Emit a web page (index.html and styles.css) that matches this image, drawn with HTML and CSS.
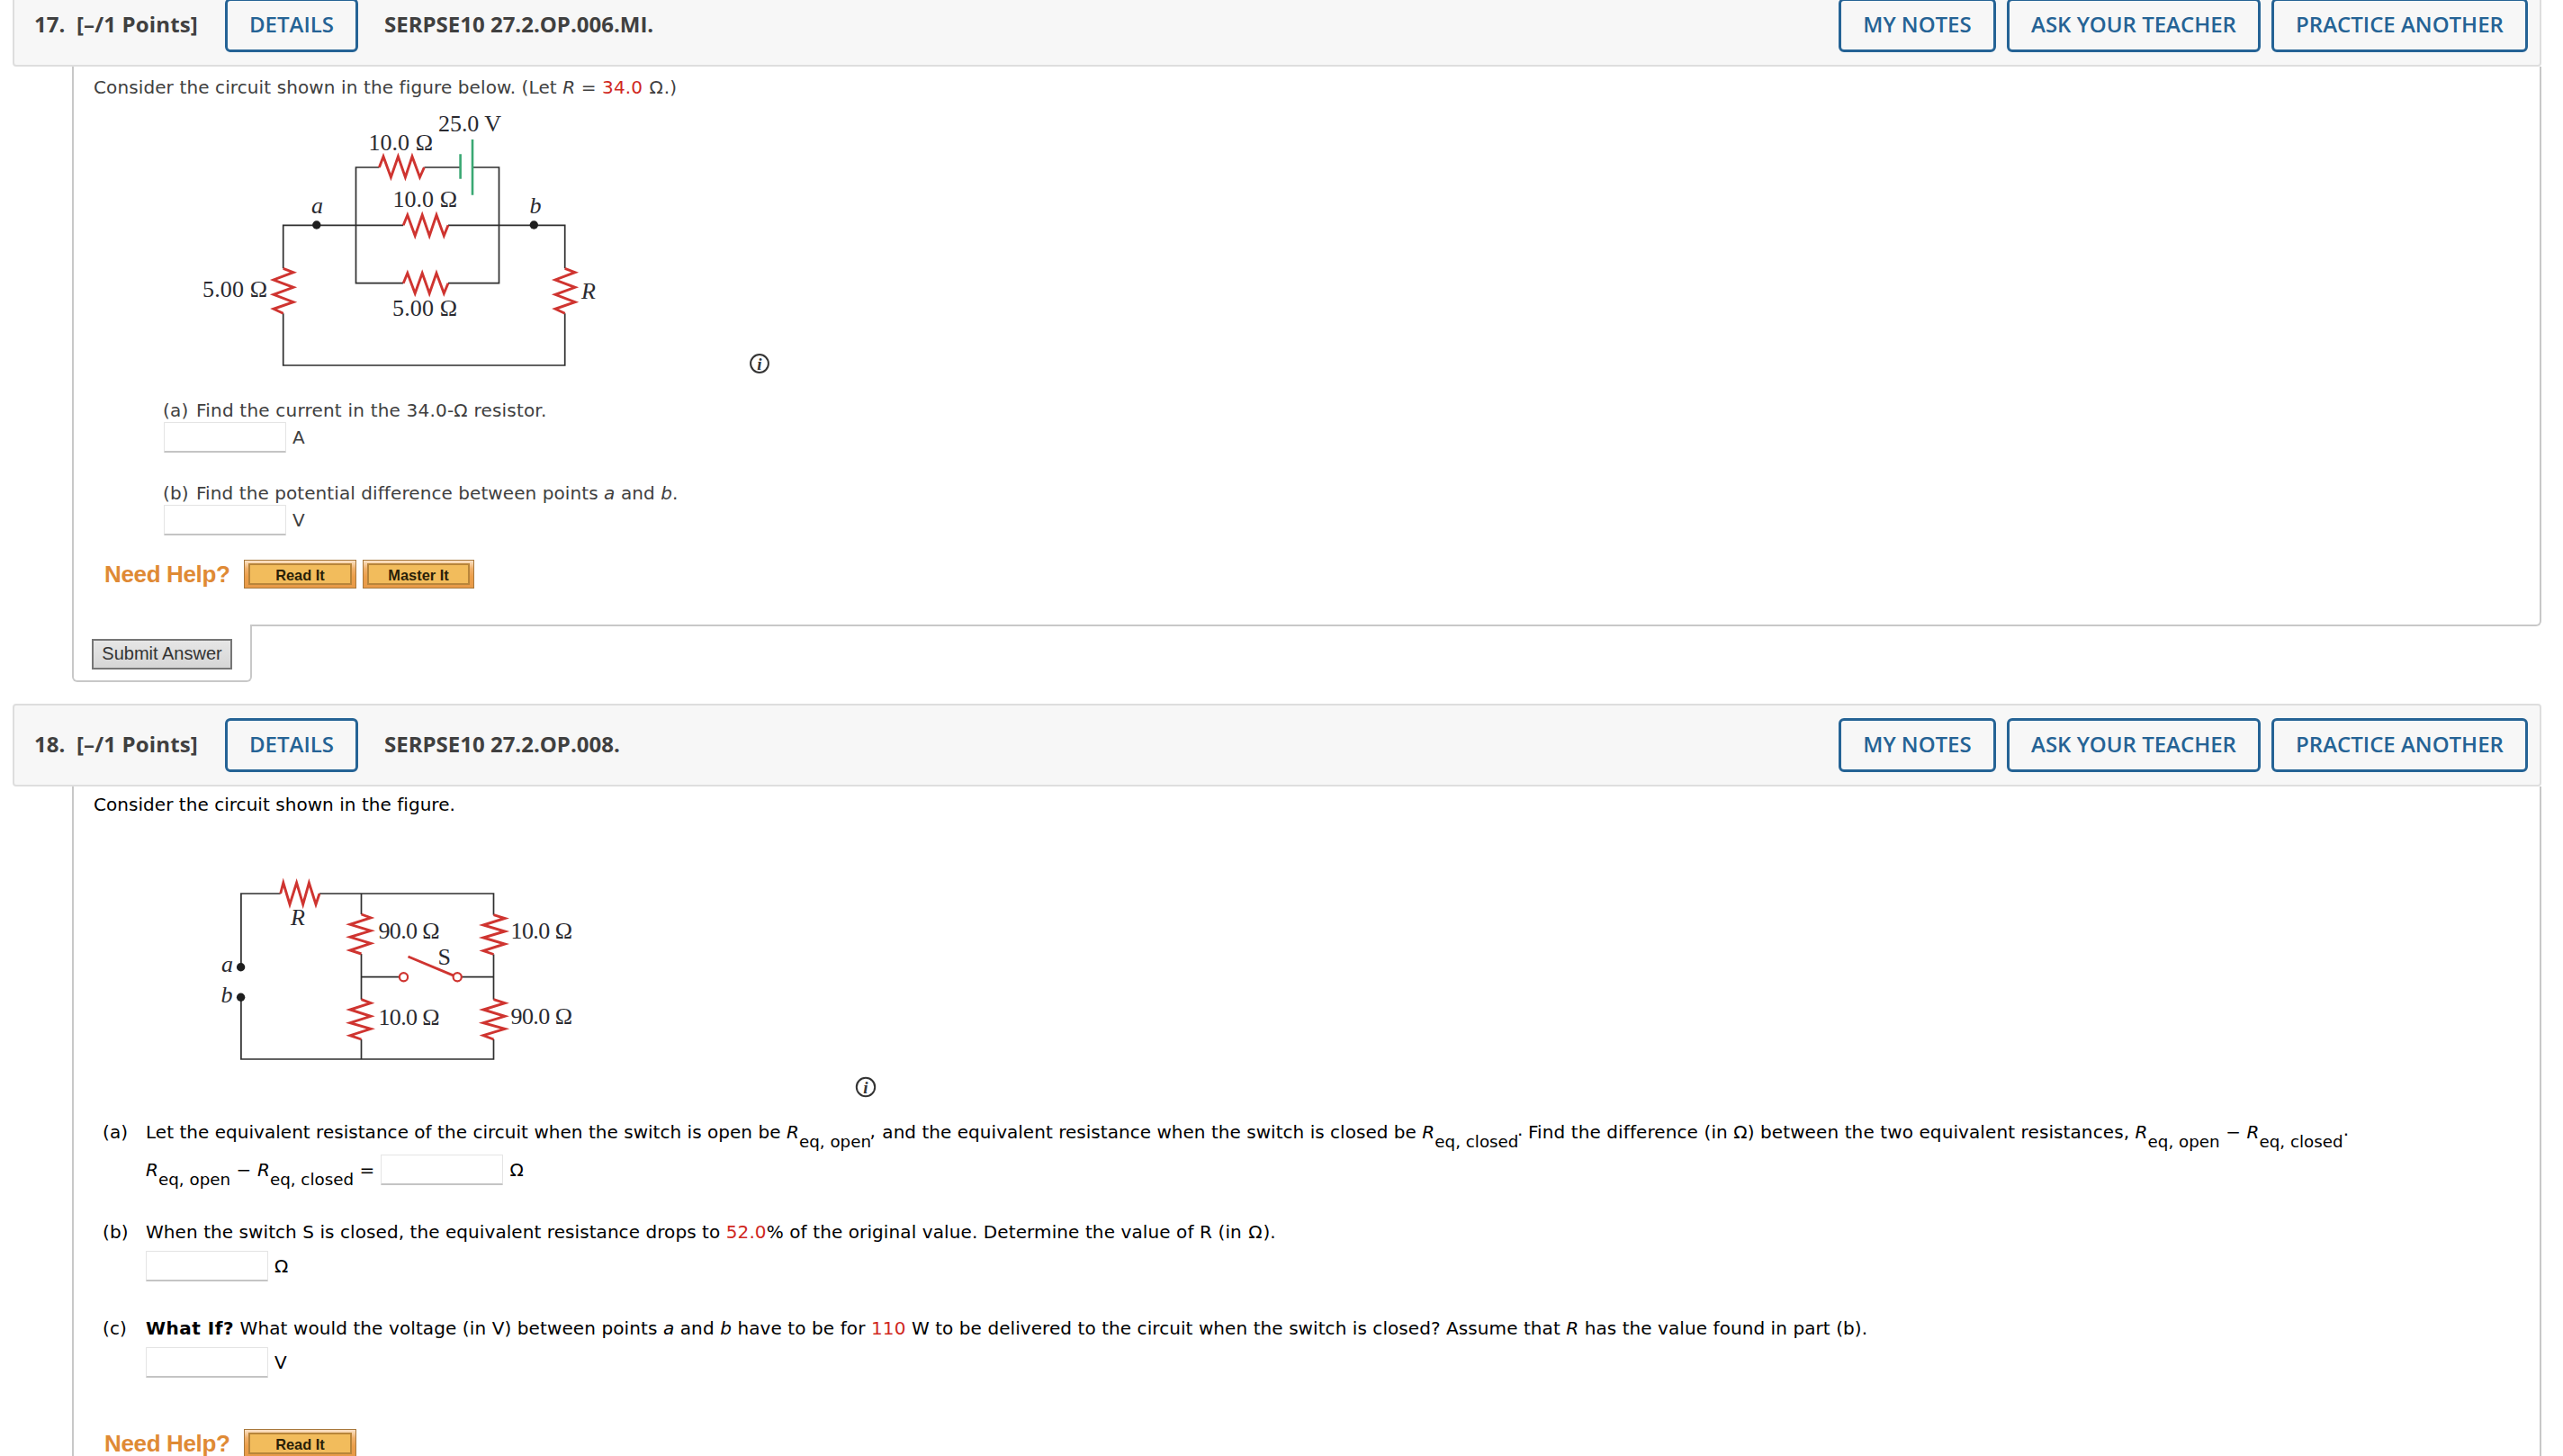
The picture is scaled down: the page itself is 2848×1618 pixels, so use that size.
FILE: index.html
```html
<!DOCTYPE html>
<html lang="en">
<head>
<meta charset="utf-8">
<title>Homework – Circuits</title>
<link rel="stylesheet" href="styles.css">
</head>
<body>
<main class="page">

<section class="question">
  <header class="bar">
    <span class="num">17.</span><span class="points">[–/1 Points]</span>
    <a class="btn details">DETAILS</a>
    <span class="code code-a">SERPSE10 27.2.OP.006.MI.</span>
    <nav class="actions"><a class="btn notes">MY NOTES</a><a class="btn ask">ASK YOUR TEACHER</a><a class="btn practice">PRACTICE ANOTHER</a></nav>
  </header>
  <div class="body body-first">
    <p class="line wide">Consider the circuit shown in the figure below. (Let <i>R</i> = <span class="red">34.0</span> <span class="ohm">Ω</span>.)</p>
    <div class="figure">
      <svg class="circuit" width="728" height="307" viewBox="104 109 728 307">
        <g class="wire">
          <path d="M421.4 186H395.5V314.7H448.2M471.4 186H511.6M525 186H554.5V314.7H498M448.2 250.3H314.7V298.3M498 250.3H627.7V298.3M314.7 348.3V406H627.7V348.3"/>
        </g>
        <g class="resistor">
          <path d="M421.4 186L426 174L434.4 197L442.4 174L450.4 197L458 174L466.5 197L471.4 186"/>
          <path d="M448.2 250.3L452.8 239L461.2 262L469.2 239L477.2 262L485 239L493.3 262L498 250.3"/>
          <path d="M448.2 314.7L452.8 303.5L461.2 326L469.2 303.5L477.2 326L485 303.5L493.3 326L498 314.7"/>
          <path d="M314.7 298.3L326 302.7L304 311L326 319.3L304 327.3L326 335.7L304 343.3L314.7 348.3"/>
          <path d="M627.7 298.3L639 302.7L617 311L639 319.3L617 327.3L639 335.7L617 343.3L627.7 348.3"/>
        </g>
        <path class="battery" d="M511.6 171.3V198.7M525 155V216.7"/>
        <g class="dot"><circle cx="351.8" cy="250" r="4.7"/><circle cx="593.3" cy="250" r="4.7"/></g>
        <g class="lbl">
          <text x="487" y="145.7" textLength="70">25.0 V</text>
          <text x="409.5" y="166.7" textLength="71.5">10.0 Ω</text>
          <text x="436.5" y="230" textLength="71.5">10.0 Ω</text>
          <text x="436" y="351" textLength="72">5.00 Ω</text>
          <text x="225" y="330" textLength="72">5.00 Ω</text>
          <text class="it" x="346" y="237">a</text>
          <text class="it" x="588.5" y="237">b</text>
          <text class="it" x="646" y="331.7">R</text>
        </g>
      </svg>
      <svg class="info" width="24" height="24" viewBox="0 0 24 24"><circle cx="12" cy="12" r="9.9"/><text x="12" y="19" text-anchor="middle">i</text></svg>
    </div>
    <div class="indent">
      <p class="line wider"><span class="tag">(a)</span> Find the current in the 34.0-Ω resistor.</p>
      <div class="answer"><span class="input"></span><span class="unit">A</span></div>
      <p class="line next"><span class="tag">(b)</span> Find the potential difference between points <i>a</i> and <i>b</i>.</p>
      <div class="answer"><span class="input"></span><span class="unit">V</span></div>
    </div>
    <div class="help"><b class="need">Need Help?</b><a class="gold read"><span>Read It</span></a><a class="gold master"><span>Master It</span></a></div>
  </div>
  <div class="tab"><a class="submit">Submit Answer</a></div>
</section>

<section class="question">
  <header class="bar">
    <span class="num">18.</span><span class="points">[–/1 Points]</span>
    <a class="btn details">DETAILS</a>
    <span class="code code-b">SERPSE10 27.2.OP.008.</span>
    <nav class="actions"><a class="btn notes">MY NOTES</a><a class="btn ask">ASK YOUR TEACHER</a><a class="btn practice">PRACTICE ANOTHER</a></nav>
  </header>
  <div class="body body-second">
    <p class="line intro">Consider the circuit shown in the figure.</p>
    <div class="figure">
      <svg class="circuit" width="846" height="314" viewBox="104 906 846 314">
        <g class="wire">
          <path d="M267.9 1074.7V993H311.7M355 993H548.5V1016.7M401.5 993V1016M401.5 1060V1110.7M548.5 1060.5V1110.7M401.5 1155V1177M548.5 1155V1177H267.9V1108.3M401.5 1085.7H444M513 1085.7H548.5"/>
        </g>
        <g class="resistor">
          <path d="M311.7 993L314.8 981L322 1005L329.6 981L336.7 1005L343.4 981L351 1005L355 993"/>
          <path d="M401.5 1016L412 1020L389 1027.3L412 1034.3L389 1041.3L412 1048.3L389 1056L401.5 1060"/>
          <path d="M548.5 1016.7L561 1020.5L537 1028L561 1035L537 1042L561 1049L537 1056.5L548.5 1060.5"/>
          <path d="M401.5 1110.7L412 1114.7L389 1122L412 1129.3L389 1136.7L412 1143.3L389 1150.7L401.5 1155"/>
          <path d="M548.5 1110.7L561 1114.7L537 1122L561 1129.3L537 1136.7L561 1143.3L537 1150.7L548.5 1155"/>
          <path d="M453.5 1063L504.6 1084.3"/>
          <circle cx="448.5" cy="1085.8" r="4.6"/><circle cx="508.2" cy="1085.8" r="4.6"/>
        </g>
        <g class="dot"><circle cx="267.6" cy="1074.7" r="4.7"/><circle cx="267.6" cy="1108.3" r="4.7"/></g>
        <g class="lbl">
          <text class="it" x="323" y="1028.3">R</text>
          <text x="420.5" y="1042.7" textLength="68">90.0 Ω</text>
          <text x="567.5" y="1042.7" textLength="68.5">10.0 Ω</text>
          <text x="420.5" y="1139.3" textLength="68">10.0 Ω</text>
          <text x="567.5" y="1138" textLength="68.5">90.0 Ω</text>
          <text x="486.5" y="1071.7">S</text>
          <text class="it" x="246" y="1080">a</text>
          <text class="it" x="245.5" y="1113.8">b</text>
        </g>
      </svg>
      <svg class="info" width="24" height="24" viewBox="0 0 24 24"><circle cx="12" cy="12" r="10.2"/><text x="12" y="19" text-anchor="middle">i</text></svg>
    </div>
    <div class="part part-a">
      <span class="line">(a)</span>
      <div>
        <p class="line"><span class="t1">Let the equivalent resistance of the circuit when the switch is open be </span><i>R</i><span class="sub">eq, open</span><span class="punct comma">,</span><span class="t1"> and the equivalent resistance when the switch is closed be </span><i>R</i><span class="sub">eq, closed</span><span class="punct">.</span> <span class="t2">Find the difference (in Ω) between the two equivalent resistances, </span><i>R</i><span class="sub">eq, open</span> − <i>R</i><span class="sub">eq, closed</span><span class="punct last">.</span></p>
        <div class="answer answer-eq"><span class="line"><i>R</i><span class="sub">eq, open</span> − <i>R</i><span class="sub">eq, closed</span> =</span><span class="input"></span><span class="unit">Ω</span></div>
      </div>
    </div>
    <div class="part part-b">
      <span class="line">(b)</span>
      <div>
        <p class="line"><span class="t0">When the switch S is closed, the equivalent resistance drops to </span><span class="red">52.0</span>% of the original value. Determine the value of R (in <span class="ohm">Ω</span>).</p>
        <div class="answer"><span class="input"></span><span class="unit">Ω</span></div>
      </div>
    </div>
    <div class="part part-c">
      <span class="line">(c)</span>
      <div>
        <p class="line"><b>What If?</b> What would the voltage (in V) between points <i>a</i> and <i>b</i> have to be for <span class="red">110</span> <span class="t0">W to be delivered to the circuit when the switch is closed? Assume that <i>R</i> has the value found in part (b).</span></p>
        <div class="answer"><span class="input"></span><span class="unit">V</span></div>
      </div>
    </div>
    <div class="help"><b class="need">Need Help?</b><a class="gold read"><span>Read It</span></a></div>
  </div>
</section>

</main>
</body>
</html>
```
FILE: styles.css
```css
* { box-sizing: border-box; }
html, body { margin: 0; height: 1618px; overflow: hidden; background: #fff; }
body { font: 20px/24px Verdana, "DejaVu Sans", sans-serif; color: #000; letter-spacing: .1px; }
p { margin: 0; }
.page { width: 2810px; height: 1636px; margin: -18px 0 0 14px; overflow: hidden; }
.question + .question { margin-top: 24px; }

/* question header bar */
.bar { display: flex; align-items: center; height: 92px; padding: 0 13px 0 22px; background: #f7f7f7; border: 2px solid #dedede; border-radius: 4px; font: 700 24px/33px "Open Sans", sans-serif; letter-spacing: 0; color: #404040; }
.num, .points, .code { padding-bottom: 4px; white-space: nowrap; }
.num { width: 47px; }
.points { width: 165px; letter-spacing: .15px; }
.btn { display: flex; align-items: center; justify-content: center; height: 60px; padding-bottom: 4px; border: 3px solid #256395; border-radius: 6px; color: #256395; font-weight: 600; white-space: nowrap; }
.details { width: 148px; margin-right: 29px; }
.actions { display: flex; gap: 12px; margin-left: auto; }
.notes { width: 175px; }
.ask { width: 282px; }
.practice { width: 285px; }

/* question body */
.body { margin-left: 66px; border: solid #c8c8c8; border-width: 0 2px; padding-left: 22px; }
.body-first { height: 622px; padding-top: 11px; border-bottom-width: 2px; border-bottom-right-radius: 6px; color: #404040; }
.body-second { height: 762px; padding-top: 8px; }
.line { white-space: pre; height: 24px; }
.intro { letter-spacing: .04px; }
.wide { letter-spacing: .11px; }
.wider { letter-spacing: .2px; }
.ohm { margin: 0 .9px; }
.tag { margin-right: 2px; }
.red { color: #d0281e; }
.figure { display: flex; align-items: flex-end; }
.indent { margin: 28px 0 0 77px; }
.next { margin-top: 33px; letter-spacing: .08px; }
.answer { display: flex; align-items: center; height: 34px; margin-top: 1px; }
.indent .answer { margin-left: 1px; }
.input { width: 136px; height: 34px; background: #fff; border: 1px solid #e4e4e4; border-bottom: 2px solid #c4c4c4; border-radius: 1px; }
.unit { margin-left: 7px; }

/* circuit drawings */
.wire path { fill: none; stroke: #2f2f2f; stroke-width: 1.7; }
.resistor { fill: none; stroke: #cf3430; stroke-width: 2.9; }
.resistor circle { fill: #fff; stroke-width: 2.2; }
.battery { stroke: #3aa873; stroke-width: 2.6; }
.dot { fill: #1e1e1e; }
.lbl { font: 26px "Liberation Serif", serif; letter-spacing: 0; fill: #2a2a30; }
.it { font-style: italic; }
.info circle { fill: none; stroke: #333; stroke-width: 2; }
.info text { font: italic 700 19px "Liberation Serif", serif; fill: #333; }

/* lettered parts */
.part { display: grid; grid-template-columns: 48px auto; margin-left: 10px; }
.part .answer { margin-top: 9px; }
.part-a { margin-top: 26px; }
.part-b, .part-c { margin-top: 40px; }
.part-c b { letter-spacing: .5px; }
.part .answer-eq { margin-top: 13px; }
.answer-eq .input { margin-left: 7px; }
.t0 { letter-spacing: .07px; }
.t1 { letter-spacing: .03px; }
.t2 { letter-spacing: .1px; }
.sub { font-size: 18.3px; line-height: 0; letter-spacing: 0; vertical-align: -9.5px; }
.punct { line-height: 0; vertical-align: 3px; margin: 0 -1px 0 -1.5px; }
.comma { vertical-align: 1px; margin-right: 1px; }
.last { margin-left: 0; }

/* help row */
.help { display: flex; align-items: center; height: 32px; margin: 27px 0 0 12px; }
.body-second .help { margin-top: 57px; }
.need { width: 155px; font: 700 26px/32px "Liberation Sans", sans-serif; letter-spacing: -.35px; color: #df8a35; }
.gold { height: 32px; margin-right: 7px; padding: 3px 4px; border: 1.5px solid #a8783c; background: linear-gradient(#fbe3c8, #f0b06a 30%, #ec9f4b 60%, #e89a48); }
.gold span { display: block; height: 24px; border: 2px solid #b8853a; background: #f2bc5c; color: #2a1f08; font: 700 16.4px/22px "Liberation Sans", sans-serif; letter-spacing: 0; text-align: center; }
.read { width: 125px; }
.master { width: 124px; }

/* submit tab hanging off the body */
.tab { width: 200px; height: 64px; margin: -2px 0 0 66px; padding: 16px 20px; background: #fff; border: 2px solid #c8c8c8; border-top: 0; border-radius: 0 0 6px 6px; }
.submit { display: block; width: 156px; height: 34px; border: 2px solid #767676; background: linear-gradient(#e6e6e6, #d6d6d6); color: #333; font: 20px/29px "Liberation Sans", sans-serif; letter-spacing: 0; text-align: center; }
```
